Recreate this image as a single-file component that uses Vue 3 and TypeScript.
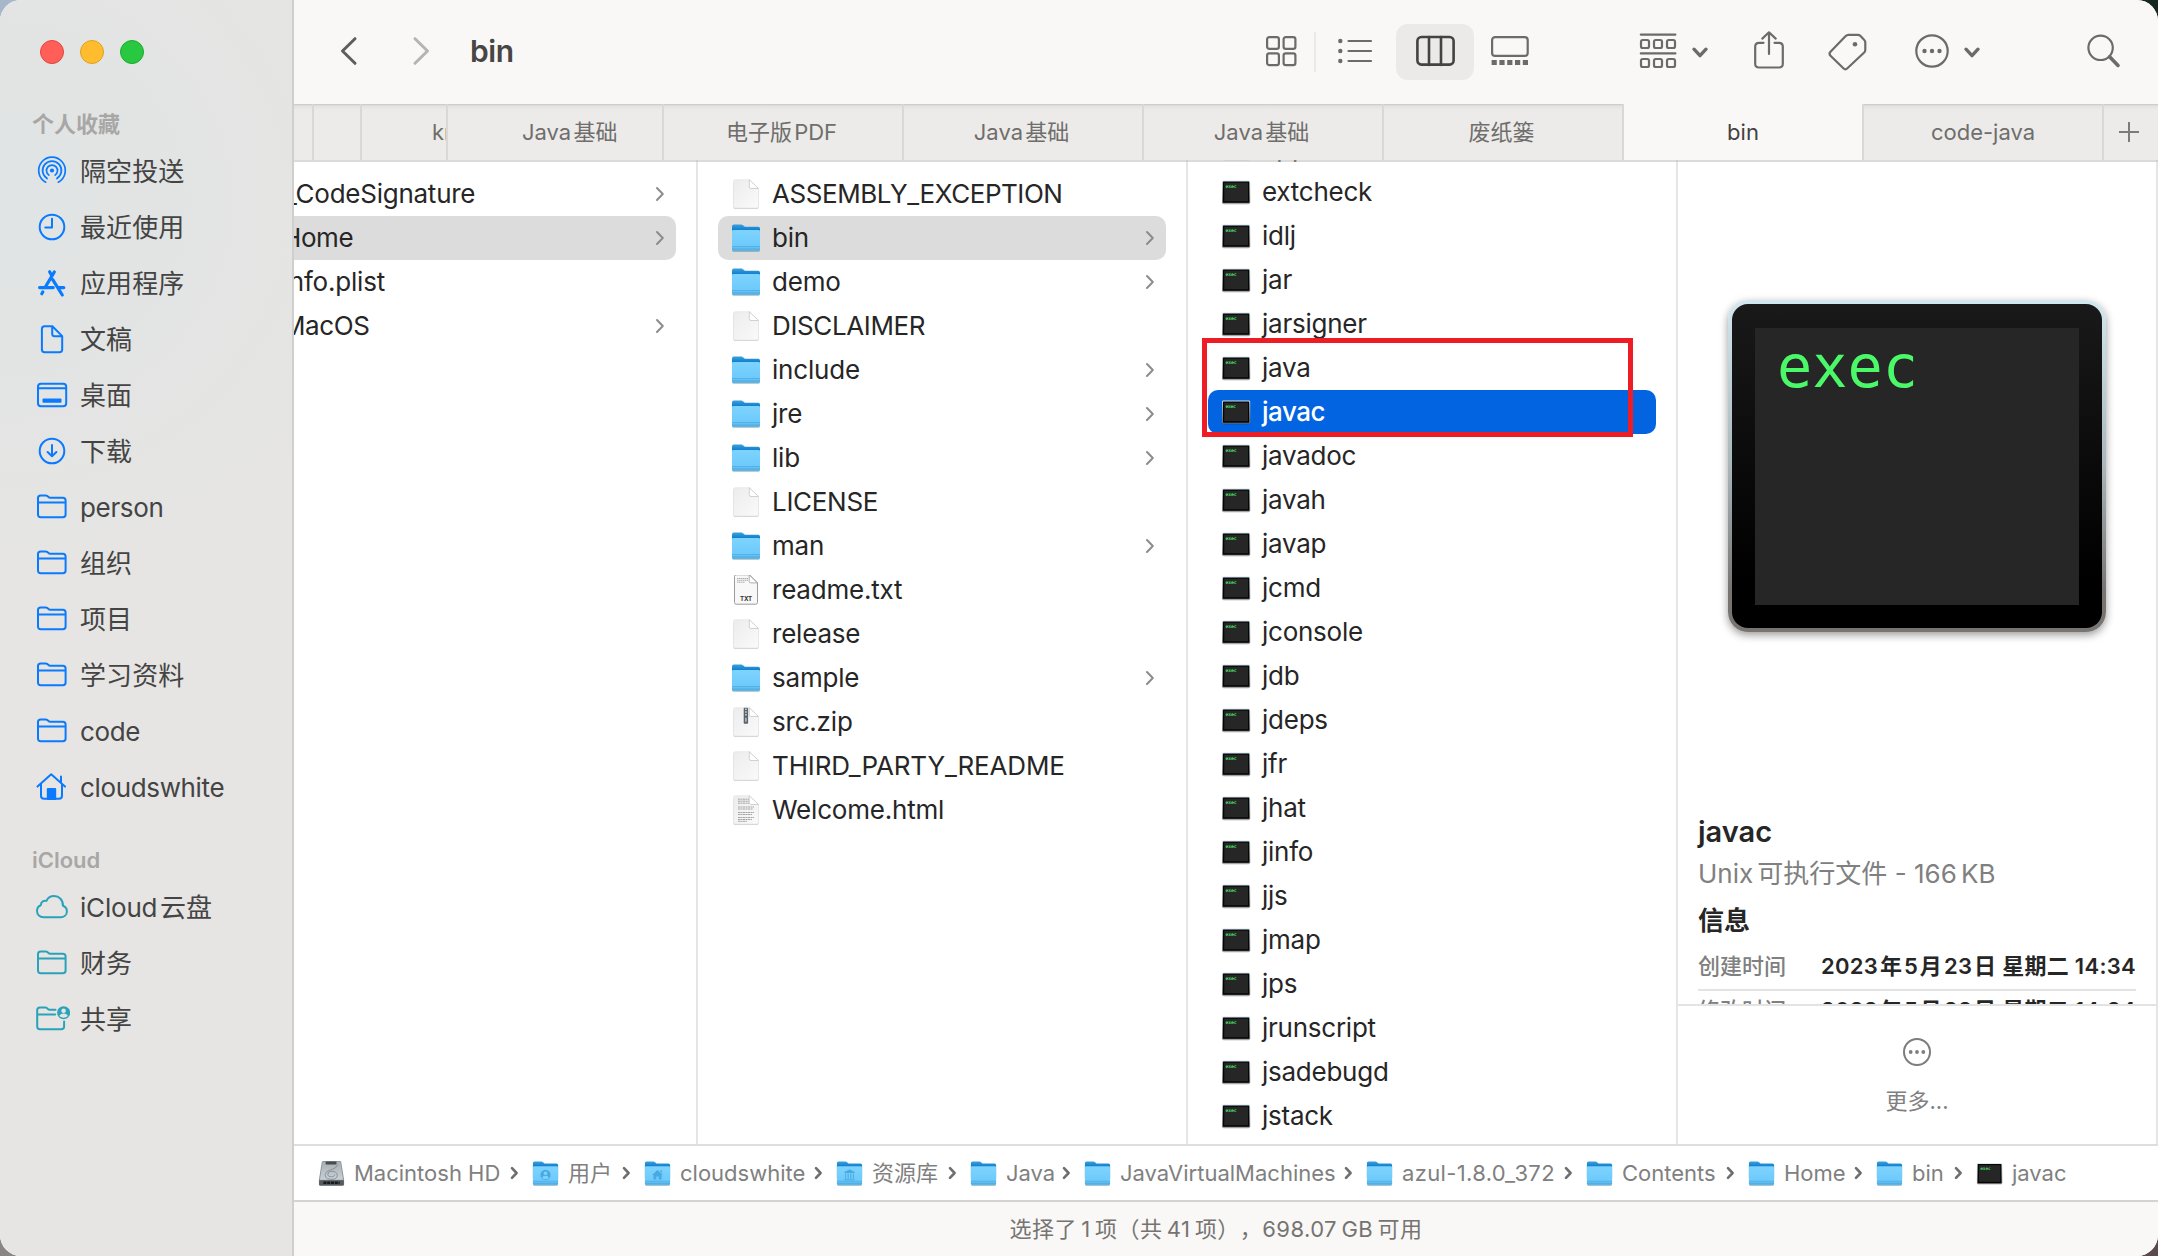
<script setup lang="ts">
interface SideItem { label: string; icon: string }
interface FileItem { name: string; icon: string; folder?: boolean; selected?: boolean; tracking?: number; indent?: number }
interface Crumb { label: string; icon: string; width: number; tracking?: number }
interface Tab { label: string; width: number; active?: boolean; pad?: number }

const favorites: SideItem[] = [
  { label: '隔空投送', icon: 'airdrop' },
  { label: '最近使用', icon: 'clock' },
  { label: '应用程序', icon: 'apps' },
  { label: '文稿', icon: 'doc' },
  { label: '桌面', icon: 'desktop' },
  { label: '下载', icon: 'download' },
  { label: 'person', icon: 'folder' },
  { label: '组织', icon: 'folder' },
  { label: '项目', icon: 'folder' },
  { label: '学习资料', icon: 'folder' },
  { label: 'code', icon: 'folder' },
  { label: 'cloudswhite', icon: 'home' },
]
const cloud: SideItem[] = [
  { label: 'iCloud云盘', icon: 'cloud' },
  { label: '财务', icon: 'folder' },
  { label: '共享', icon: 'shared' },
]
const tabs: Tab[] = [
  { label: '', width: 20 },
  { label: '', width: 48 },
  { label: 'kn', width: 86, pad: 70 },
  { label: 'Java基础', width: 216, pad: 74 },
  { label: '电子版PDF', width: 240 },
  { label: 'Java基础', width: 240 },
  { label: 'Java基础', width: 240 },
  { label: '废纸篓', width: 240 },
  { label: 'bin', width: 240, active: true },
  { label: 'code-java', width: 240 },
]
const colOne: FileItem[] = [
  { name: '_CodeSignature', icon: 'folder', folder: true, tracking: -0.25, indent: 3 },
  { name: 'Home', icon: 'folder', folder: true, selected: true, tracking: -0.4 },
  { name: 'Info.plist', icon: 'file' },
  { name: 'MacOS', icon: 'folder', folder: true, tracking: -0.4 },
]
const colTwo: FileItem[] = [
  { name: 'ASSEMBLY_EXCEPTION', icon: 'file', tracking: -0.45 },
  { name: 'bin', icon: 'folder', folder: true, selected: true },
  { name: 'demo', icon: 'folder', folder: true },
  { name: 'DISCLAIMER', icon: 'file', tracking: -0.38 },
  { name: 'include', icon: 'folder', folder: true },
  { name: 'jre', icon: 'folder', folder: true },
  { name: 'lib', icon: 'folder', folder: true },
  { name: 'LICENSE', icon: 'file', tracking: -0.3 },
  { name: 'man', icon: 'folder', folder: true },
  { name: 'readme.txt', icon: 'txt' },
  { name: 'release', icon: 'file' },
  { name: 'sample', icon: 'folder', folder: true },
  { name: 'src.zip', icon: 'zip' },
  { name: 'THIRD_PARTY_README', icon: 'file', tracking: -0.15 },
  { name: 'Welcome.html', icon: 'html' },
]
const binaries: string[] = [
  'appletviewer', 'extcheck', 'idlj', 'jar', 'jarsigner', 'java', 'javac', 'javadoc', 'javah', 'javap', 'jcmd',
  'jconsole', 'jdb', 'jdeps', 'jfr', 'jhat', 'jinfo', 'jjs', 'jmap', 'jps', 'jrunscript', 'jsadebugd', 'jstack',
]
const crumbs: Crumb[] = [
  { label: 'Macintosh HD', icon: 'disk', width: 214 },
  { label: '用户', icon: 'users', width: 112 },
  { label: 'cloudswhite', icon: 'homefolder', width: 192 },
  { label: '资源库', icon: 'library', width: 134 },
  { label: 'Java', icon: 'folder', width: 114 },
  { label: 'JavaVirtualMachines', icon: 'folder', width: 282 },
  { label: 'azul-1.8.0_372', icon: 'folder', width: 220, tracking: 0.35 },
  { label: 'Contents', icon: 'folder', width: 162 },
  { label: 'Home', icon: 'folder', width: 128 },
  { label: 'bin', icon: 'folder', width: 100 },
  { label: 'javac', icon: 'exec', width: 110 },
]

// Splits a label wherever Han characters touch Latin ones, so a thin gap can be set between them.
function runs(text: string): string[] {
  return text.split(/(?<=[\u4e00-\u9fff])(?=[A-Za-z0-9])|(?<=[A-Za-z0-9])(?=[\u4e00-\u9fff])/)
}
</script>

<template>
  <div class="desktop">
    <svg class="sprite" width="0" height="0" aria-hidden="true">
      <defs>
        <linearGradient id="gFolder" x1="0" y1="0" x2="0" y2="1">
          <stop offset="0" stop-color="#7dd3fd" /><stop offset=".75" stop-color="#6ecafb" /><stop offset="1" stop-color="#55b5ea" />
        </linearGradient>
        <linearGradient id="gBack" x1="0" y1="0" x2="0" y2="1">
          <stop offset="0" stop-color="#3c9fdc" /><stop offset=".3" stop-color="#0e7fcd" /><stop offset="1" stop-color="#0e7fcd" />
        </linearGradient>
        <linearGradient id="gPaper" x1="0" y1="0" x2="1" y2="1">
          <stop offset="0" stop-color="#ececec" /><stop offset="1" stop-color="#fafafa" />
        </linearGradient>
        <linearGradient id="gFrame" x1="0" y1="0" x2="0" y2="1">
          <stop offset="0" stop-color="#d3e6ec" /><stop offset="1" stop-color="#777574" />
        </linearGradient>
        <linearGradient id="gDisk" x1="0" y1="0" x2="0" y2="1">
          <stop offset="0" stop-color="#a9b0b4" /><stop offset="1" stop-color="#c9d1d6" />
        </linearGradient>
      </defs>
      <symbol id="f-folder" viewBox="0 0 30 30">
        <rect x="1.2" y="6" width="27.6" height="23" rx="1.6" fill="#000" opacity=".22" />
        <path d="M1 3.4Q1 1.6 2.8 1.6h7.4q1 0 1.8.7l1.2.9q.7.6 1.6.6h12.4q1.8 0 1.8 1.8V20H1z" fill="url(#gBack)" />
        <path d="M1 8.2Q1 6.9 2.3 6.9h25.4q1.3 0 1.3 1.3v18.2q0 1.6-1.6 1.6H2.6Q1 28 1 26.400z" fill="url(#gFolder)" />
        <path d="M1 23.600h28M1 26h28" stroke="#45a3dc" stroke-width=".8" opacity=".8" />
      </symbol>
      <symbol id="f-file" viewBox="0 0 30 30">
        <path d="M2.500 2.800q0-1.800 1.800-1.800h14l9.200 8.800v18q0 1.800-1.800 1.800H4.300q-1.800 0-1.800-1.800z" fill="#000" opacity=".16" transform="translate(0 .7)" />
        <path d="M2.500 2.500Q2.500.7 4.300.7h14l9.200 8.800v17.700q0 1.800-1.800 1.800H4.300q-1.800 0-1.800-1.800z" fill="url(#gPaper)" stroke="#dcdcdc" stroke-width=".5" />
        <path d="M18.300.700v7.200q0 1.600 1.600 1.600h7.600z" fill="#fff" stroke="#c6c6c6" stroke-width=".8" />
      </symbol>
      <symbol id="f-txt" viewBox="0 0 30 30">
        <path d="M3.500 1.500q0-1.700 1.700-1.700h13.300l8 8v19.700q0 1.700-1.700 1.700H5.200q-1.700 0-1.700-1.700z" fill="#f8f8f8" stroke="#9c9c9c" stroke-width="1" />
        <path d="M18.200-.1v6.500q0 1.500 1.500 1.500h6.600z" fill="#fff" stroke="#9b9b9b" stroke-width=".8" />
        <path d="M6 3.500h11M6 5.300h11M6 7.200h8" stroke="#9a9a9a" stroke-width=".8" stroke-dasharray="1.600 .4" />
        <text x="15" y="25.500" text-anchor="middle" font-family="Inter, sans-serif" font-weight="700" font-size="6.200" fill="#333">TXT</text>
      </symbol>
      <symbol id="f-zip" viewBox="0 0 30 30">
        <use href="#f-file" width="30" height="30" />
        <rect x="12.700" y=".7" width="4.400" height="16" rx="1" fill="#59636c" />
        <path d="M14.900 1.500v8" stroke="#c3cbd0" stroke-width="1.800" stroke-dasharray="1.500 1.300" />
        <rect x="14" y="10.500" width="1.800" height="4.500" rx=".9" fill="#aab3b9" />
      </symbol>
      <symbol id="f-html" viewBox="0 0 30 30">
        <use href="#f-file" width="30" height="30" />
        <path d="M7 4.200h11M7 6.200h11M7 8.200h11M7 12h16M7 14h15M7 17.500h16M7 19.500h14M7 22.500h16M7 24.500h14M7 26.300h9" stroke="#a5a5a5" stroke-width="1" stroke-dasharray="2.600 .5 1.400 .4" />
      </symbol>
      <symbol id="f-exec" viewBox="0 0 30 30">
        <rect x="1.300" y="5" width="27.600" height="22.400" rx="1.400" fill="#000" opacity=".18" />
        <rect x="1" y="3.500" width="28.200" height="23" rx="1.300" fill="url(#gFrame)" />
        <rect x="1.900" y="4.500" width="26.400" height="21.200" rx=".6" fill="#050505" />
        <rect x="3.200" y="5.700" width="23.800" height="18.500" fill="#262626" />
        <text x="4.600" y="10.600" font-family="'DejaVu Sans Mono', monospace" font-weight="700" font-size="4.900" fill="#46d35f">exec</text>
      </symbol>
      <symbol id="f-users" viewBox="0 0 30 30">
        <use href="#f-folder" width="30" height="30" />
        <circle cx="15" cy="16.500" r="5.700" fill="#48a9e3" /><circle cx="15" cy="14.800" r="2" fill="#7dd3fd" />
        <path d="M11.200 20q.8-2.600 3.800-2.600t3.800 2.600q-3.800 3-7.600 0z" fill="#7dd3fd" />
      </symbol>
      <symbol id="f-homefolder" viewBox="0 0 30 30">
        <use href="#f-folder" width="30" height="30" />
        <path d="M15 11l6 5.600h-1.500v5.100h-3.200v-3.500h-2.600v3.500h-3.200v-5.100H9zM18.300 11.500h1.600v3l-1.600-1.500z" fill="#48a9e3" />
      </symbol>
      <symbol id="f-library" viewBox="0 0 30 30">
        <use href="#f-folder" width="30" height="30" />
        <path d="M15 11l5.500 2.800h-11zM10.700 15v6M13.500 15v6M16.500 15v6M19.300 15v6M9.200 22h11.600" fill="#48a9e3" stroke="#48a9e3" stroke-width="1.100" />
      </symbol>
      <symbol id="f-disk" viewBox="0 0 30 30">
        <path d="M4.200 2.200Q4.400 1 5.800 1h18.400q1.400 0 1.600 1.200L29 22v5q0 1.500-1.500 1.500h-25Q1 28.500 1 27v-5z" fill="#8f979c" />
        <path d="M5.200 2.200h19.600L27.800 22H2.200z" fill="url(#gDisk)" />
        <rect x="8.500" y="1.800" width="12" height="3.200" rx=".6" fill="#474c50" />
        <path d="M22 5q-1.500 4-6.500 5.500c-4 1.300-8 3-7.500 7 .5 3 4 4 7 4s6.500-1 6.500-4.500c0-3-3.500-4.500-6-4.500s-4.500 1-4.500 3.500 2 2.600 4 2.600 3.500-.8 3.500-2.400" fill="none" stroke="#7c868c" stroke-width=".9" />
        <path d="M1.300 22.500h27.400v4.700q0 1-1 1H2.300q-1 0-1-1z" fill="#555b5f" />
        <path d="M6 25.300h18" stroke="#17191a" stroke-width="3" stroke-dasharray="3.400 .8" />
      </symbol>

      <symbol id="s-folder" viewBox="0 0 36 36">
        <path d="M4 9q0-2.600 2.600-2.600h5q1 0 1.800.7l1 .9q.8.700 1.800.7h12.600q2.800 0 2.800 2.800v13.900q0 2.800-2.800 2.800H6.800Q4 28.200 4 25.400zM4 13.600h27.600" />
      </symbol>
      <symbol id="s-airdrop" viewBox="0 0 36 36">
        <circle cx="18" cy="17.500" r="2.100" fill="currentColor" stroke="none" />
        <path d="M14.900 22.100a5.500 5.500 0 1 1 6.200 0M13.100 25.500a9.400 9.400 0 1 1 9.800 0M11.700 29.200a13.300 13.300 0 1 1 12.600 0" stroke-width="1.700" />
      </symbol>
      <symbol id="s-clock" viewBox="0 0 36 36">
        <circle cx="18" cy="18" r="12.300" /><path d="M18 9.700v8.700h-6.700" />
      </symbol>
      <symbol id="s-apps" viewBox="0 0 36 36">
        <path d="M20.300 7l-8.800 14.800M15.600 6.800l2.400 4.200M18.700 14.700l9.600 15.300M5.600 22.600h13.600M24.800 22.600h5M8.800 27l-1 1.700" stroke-width="3.200" />
      </symbol>
      <symbol id="s-doc" viewBox="0 0 36 36">
        <path d="M7.900 8q0-2.700 2.700-2.700h7.800l9.800 9.800v13.400q0 2.700-2.700 2.700H10.600q-2.700 0-2.700-2.700zM18.200 5.500v7.300q0 2.500 2.500 2.500h7.400" />
      </symbol>
      <symbol id="s-desktop" viewBox="0 0 36 36">
        <rect x="4" y="6.800" width="28.200" height="22.400" rx="3" /><path d="M4 11.300h28" />
        <rect x="8.500" y="21.600" width="19" height="4.200" rx="1" fill="currentColor" stroke="none" />
      </symbol>
      <symbol id="s-download" viewBox="0 0 36 36">
        <circle cx="18" cy="18" r="12.300" /><path d="M18 12v11M13.600 19l4.400 4.300 4.400-4.300" />
      </symbol>
      <symbol id="s-home" viewBox="0 0 36 36">
        <path d="M3.500 17.600L17.200 5.200 31 17.600M7 15.500v11.300q0 3 3 3h15q3 0 3-3V15.500M27 13V7.500" />
        <path d="M13.800 30v-10h7.400v10z" fill="currentColor" />
      </symbol>
      <symbol id="s-cloud" viewBox="0 0 36 36">
        <path d="M9.600 28.200h16.900c3.700 0 6.400-2.500 6.400-5.800 0-2.700-1.700-4.800-4-5.600.3-5.900-3.800-9.700-8.800-9.700-3.600 0-6.300 1.900-7.600 4.700-3-.7-5.500 1.200-5.700 4.400C4.600 17 3 19.400 3 22.100c0 3.500 2.800 6.100 6.600 6.100z" />
      </symbol>
      <symbol id="s-shared" viewBox="0 0 36 36">
        <path d="M21.500 8.700h-5.800q-1 0-1.800-.7l-.9-.9q-.7-.7-1.700-.7H6Q3.200 6.400 3.200 9v16.400q0 2.800 2.800 2.800h21.200q2.900 0 2.900-2.800v-4.800M3.200 13.600h18" />
        <circle cx="29.600" cy="11.700" r="6.500" fill="currentColor" stroke="none" />
        <circle cx="29.600" cy="9.700" r="2.300" fill="#e6e5e3" stroke="none" /><path d="M25.400 15q.8-2.600 4.200-2.600t4.200 2.600q-1.800 1.700-4.200 1.700T25.400 15z" fill="#e6e5e3" stroke="none" />
      </symbol>
    </svg>

    <div class="window">
      <aside class="sidebar">
        <div class="lights"><i class="red" /><i class="amber" /><i class="green" /></div>
        <h2 class="group">个人收藏</h2>
        <ul class="side-list">
          <li v-for="f in favorites" :key="f.label" :class="{ latin: /^\w+$/.test(f.label) }">
            <svg class="side-icon" width="36" height="36"><use :href="'#s-' + f.icon" /></svg><span>{{ f.label }}</span>
          </li>
        </ul>
        <h2 class="group second">iCloud</h2>
        <ul class="side-list teal">
          <li v-for="f in cloud" :key="f.label">
            <svg class="side-icon" width="36" height="36"><use :href="'#s-' + f.icon" /></svg>
            <span><span v-for="(r, i) in runs(f.label)" :key="i" class="run">{{ r }}</span></span>
          </li>
        </ul>
      </aside>

      <main class="main">
        <header class="toolbar">
          <svg class="back" width="20" height="40" viewBox="0 0 20 40"><path d="M16 6.700L3.500 19 16 31.300" /></svg>
          <svg class="fwd" width="20" height="40" viewBox="0 0 20 40"><path d="M4 6.700L16.500 19 4 31.300" /></svg>
          <h1>bin</h1>
          <svg class="grid" width="30" height="40" viewBox="0 0 30 40">
            <rect x="1.100" y="5.100" width="11.800" height="11.800" rx="2.200" /><rect x="17.600" y="5.100" width="11.800" height="11.800" rx="2.200" />
            <rect x="1.100" y="21.300" width="11.800" height="11.800" rx="2.200" /><rect x="17.600" y="21.300" width="11.800" height="11.800" rx="2.200" />
          </svg>
          <i class="rule" />
          <svg class="list" width="36" height="40" viewBox="0 0 36 40">
            <path d="M10.500 9H33M10.500 19H33M10.500 29H33" />
            <g fill="#6c6b69" stroke="none"><circle cx="2.300" cy="9" r="2.200" /><circle cx="2.300" cy="19" r="2.200" /><circle cx="2.300" cy="29" r="2.200" /></g>
          </svg>
          <span class="view-on">
            <svg width="40" height="40" viewBox="0 0 40 40"><rect x="2.400" y="5" width="36.200" height="27.600" rx="4" /><path d="M14 5v28M26 5v28" /></svg>
          </span>
          <svg class="gallery" width="38" height="40" viewBox="0 0 38 40">
            <rect x="1.100" y="5.100" width="35.600" height="18.800" rx="3" /><path class="sq" d="M.6 30.500h36.600" />
          </svg>
          <svg class="group-by" width="36" height="40" viewBox="0 0 36 40">
            <path d="M.8 2.600h34.600M.8 21.400h34.600" />
            <g><rect x="1" y="8" width="8" height="8" rx="1.800" /><rect x="14" y="8" width="8" height="8" rx="1.800" /><rect x="27" y="8" width="8" height="8" rx="1.800" />
              <rect x="1" y="27" width="8" height="8" rx="1.800" /><rect x="14" y="27" width="8" height="8" rx="1.800" /><rect x="27" y="27" width="8" height="8" rx="1.800" /></g>
          </svg>
          <svg class="caret c1" width="16" height="40" viewBox="0 0 16 40"><path d="M2 17.200l6 6.400 6-6.400" /></svg>
          <svg class="share" width="30" height="40" viewBox="0 0 30 40">
            <path d="M9.500 10.800H5Q1.200 10.800 1.200 14.500v17.300q0 3.700 3.800 3.700h20q3.800 0 3.800-3.700V14.500q0-3.700-3.800-3.700h-4.500M15 22V1M8.300 6.600L15 0.300l6.700 6.300" />
          </svg>
          <svg class="tag" width="40" height="40" viewBox="0 0 40 40">
            <path d="M20.500 2.800h9.300q1.500 0 2.500 1l3.800 4q1.200 1.200 1.200 2.800v7.200q0 1.600-1.100 2.700L19.400 36.300q-2 2-4 0L2.500 23.800q-2-2 0-4L17.700 4.100q1.200-1.300 2.800-1.300z" /><circle cx="27" cy="12.300" r="2.300" fill="#6c6b69" stroke="none" />
          </svg>
          <svg class="more" width="34" height="40" viewBox="0 0 34 40">
            <circle cx="17" cy="19" r="15.700" /><g fill="#6c6b69" stroke="none"><circle cx="9.500" cy="19" r="2.200" /><circle cx="17" cy="19" r="2.200" /><circle cx="24.500" cy="19" r="2.200" /></g>
          </svg>
          <svg class="caret c2" width="16" height="40" viewBox="0 0 16 40"><path d="M2 17.200l6 6.400 6-6.400" /></svg>
          <svg class="search" width="34" height="40" viewBox="0 0 34 40"><circle cx="13.600" cy="15.800" r="12.200" /><path d="M22.600 24.800l8.400 8.600" stroke-width="3.600" /></svg>
        </header>

        <nav class="tabs">
          <div v-for="(t, i) in tabs" :key="i" class="tab" :class="{ active: t.active, left: t.pad }" :style="{ width: t.width + 'px', paddingLeft: (t.pad ?? 0) + 'px' }">
            <span v-for="(r, j) in runs(t.label)" :key="j" class="run">{{ r }}</span>
          </div>
          <div class="plus"><svg width="20" height="20" viewBox="0 0 20 20"><path d="M10 0v20M0 10h20" /></svg></div>
        </nav>

        <section class="columns">
          <ul class="col first">
            <li v-for="f in colOne" :key="f.name" :class="{ selected: f.selected }">
              <svg width="30" height="30"><use :href="'#f-' + f.icon" /></svg><span :style="{ letterSpacing: (f.tracking ?? -0.2) + 'px', paddingLeft: (f.indent ?? 0) + 'px' }">{{ f.name }}</span>
              <svg v-if="f.folder" class="chev" width="8" height="14" viewBox="0 0 8 14"><path d="M1 1l5.800 6L1 13" /></svg>
            </li>
          </ul>
          <ul class="col">
            <li v-for="f in colTwo" :key="f.name" :class="{ selected: f.selected }">
              <svg width="30" height="30"><use :href="'#f-' + f.icon" /></svg><span :style="{ letterSpacing: (f.tracking ?? -0.2) + 'px' }">{{ f.name }}</span>
              <svg v-if="f.folder" class="chev" width="8" height="14" viewBox="0 0 8 14"><path d="M1 1l5.800 6L1 13" /></svg>
            </li>
          </ul>
          <ul class="col third">
            <li v-for="b in binaries" :key="b" :class="{ chosen: b === 'javac' }">
              <svg width="30" height="30"><use href="#f-exec" /></svg><span>{{ b }}</span>
            </li>
            <i class="marker" />
          </ul>
          <article class="preview">
            <div class="stage"><div class="frame"><div class="bezel"><div class="screen">exec</div></div></div></div>
            <div class="info">
              <h3>javac</h3>
              <p class="kind"><span v-for="(r, i) in runs('Unix可执行文件 - 166')" :key="i" class="run">{{ r }}</span><span class="run unit">KB</span></p>
              <h4>信息</h4>
              <dl>
                <div v-for="label in ['创建时间', '修改时间']" :key="label" class="pair">
                  <dt>{{ label }}</dt>
                  <dd><span v-for="(r, i) in runs('2023年5月23日 星期二 14:34')" :key="i" class="run">{{ r }}</span></dd>
                </div>
              </dl>
            </div>
            <footer class="actions">
              <svg width="30" height="30" viewBox="0 0 30 30"><circle cx="15" cy="15" r="13" /><g fill="#7d7d7d" stroke="none"><circle cx="8.700" cy="15" r="1.900" /><circle cx="15" cy="15" r="1.900" /><circle cx="21.300" cy="15" r="1.900" /></g></svg>
              <span>更多...</span>
            </footer>
          </article>
        </section>

        <div class="path">
          <div v-for="(c, i) in crumbs" :key="i" class="crumb" :style="{ width: c.width + 'px' }">
            <svg width="27" height="27"><use :href="'#f-' + c.icon" /></svg><span :style="{ letterSpacing: (c.tracking ?? 0) + 'px' }">{{ c.label }}</span>
            <svg v-if="i < crumbs.length - 1" class="sep" width="9" height="14" viewBox="0 0 9 14"><path d="M2 2.200L6.600 7 2 11.800" /></svg>
          </div>
        </div>
        <div class="status"><p><span v-for="(r, i) in runs('选择了1项（共41项），698.07')" :key="i" class="run">{{ r }}</span><span class="run">GB</span><span class="run">可用</span></p></div>
      </main>
    </div>
  </div>
</template>

<style>
body { margin: 0; overflow: hidden; }
</style>

<style scoped>
.desktop {
  width: 2158px; height: 1256px;
  background:
    linear-gradient(#a7b7ca, #a7b7ca) 0 0 / 50% 50% no-repeat,
    linear-gradient(#17281f, #17281f) 100% 0 / 50% 50% no-repeat,
    linear-gradient(#8b8484, #8b8484) 0 100% / 50% 50% no-repeat,
    #5b4a4b;
  font-family: Inter, "Noto Sans CJK SC", sans-serif;
  font-size: 26px;
  color: #262626;
}
.sprite { position: absolute; }
h1, h2, h3, h4, p, ul, dl, dd { margin: 0; padding: 0; list-style: none; }
svg { flex: none; display: block; overflow: visible; }
.run + .run { margin-left: 0.1em; }

.window { width: 2158px; height: 1256px; display: flex; border-radius: 21px; overflow: hidden; background: #fff; }

.sidebar {
  box-sizing: border-box; width: 294px; flex: none;
  border-right: 2px solid #d0cfce;
  background: radial-gradient(420px 400px at 0 200px, #e0e4e4, rgba(224, 228, 228, 0)), #e6e5e3;
}
.lights { display: flex; gap: 16px; padding: 40px 0 0 40px; height: 24px; }
.lights i { width: 24px; height: 24px; border-radius: 50%; box-sizing: border-box; }
.red { background: #ff5f57; border: 1px solid #e0443e; }
.amber { background: #febc2e; border: 1px solid #dea123; }
.green { background: #28c840; border: 1px solid #1aab29; }
.group { margin: 44px 0 0 32px; height: 32px; line-height: 32px; font-size: 22px; font-weight: 600; color: #a8a7a6; }
.group.second { margin-top: 29px; }
.side-list { margin-top: 3px; color: #444; }
.side-list li { height: 56px; display: flex; align-items: center; padding-left: 34px; line-height: 57px; letter-spacing: 0.1px; }
.side-list li.latin { letter-spacing: -0.35px; }
.side-list.teal .run:first-child:not(:last-child) { letter-spacing: -0.2px; }
.side-list li > span { margin-left: 10px; }
.side-icon { color: #0a7aff; fill: none; stroke: currentColor; stroke-width: 2; stroke-linecap: round; stroke-linejoin: round; }
.teal .side-icon { color: #29a3b9; }

.main { flex: 1; min-width: 0; display: flex; flex-direction: column; }
.toolbar { height: 104px; flex: none; display: flex; align-items: center; background: #f9f8f6; }
.toolbar svg { fill: none; stroke: #6c6b69; stroke-width: 2.200; stroke-linecap: round; stroke-linejoin: round; }
.toolbar .back { margin-left: 45px; stroke-width: 3; stroke: #5f5e5d; }
.toolbar .fwd { margin-left: 52px; stroke-width: 3; stroke: #b5b4b3; }
h1 { margin: 0 0 2px 39px; width: 796px; font-size: 30px; line-height: 40px; font-weight: 600; color: #474645; letter-spacing: -0.4px; }
.rule { margin-left: 18px; width: 2px; height: 40px; background: #ebeae8; }
.list { margin-left: 22px; }
.view-on { margin-left: 22px; width: 78px; height: 56px; border-radius: 12px; background: #ebeae8; display: flex; align-items: center; justify-content: center; }
.toolbar .view-on svg { stroke: #444341; stroke-width: 2.600; }
.gallery { margin-left: 17px; }
.gallery .sq { stroke-width: 5; stroke-dasharray: 5.200 2.600; stroke-linecap: butt; }
.group-by { margin-left: 111px; }
.toolbar .caret { stroke-width: 3.400; }
.c1 { margin-left: 16px; }
.share { margin-left: 46px; }
.tag { margin-left: 44px; }
.more { margin-left: 47px; }
.c2 { margin-left: 15px; }
.search { margin-left: 107px; }

.tabs { height: 56px; flex: none; display: flex; background: #f9f8f6; }
.tab {
  box-sizing: border-box; flex: none; display: flex; align-items: center; justify-content: center; overflow: hidden; white-space: nowrap;
  padding-right: 3px;
  border-right: 2px solid #d9d8d6; background: linear-gradient(#c8c7c5, #e3e2e0 2px, #ecebe9 6px);
  font-size: 22px; line-height: 56px; color: #6f6e6c;
}
.tab.left { justify-content: flex-start; padding-right: 0; }
.tab.active, .tab.active + .tab { padding-right: 0; }
.tab.active { background: #f9f8f6; color: #434241; }
.plus { flex: 1; display: flex; align-items: center; justify-content: center; background: linear-gradient(#c8c7c5, #e3e2e0 2px, #ecebe9 6px); }
.plus svg { stroke: #7c7b7a; stroke-width: 2; position: relative; left: -2px; }

.columns { position: relative; height: 984px; flex: none; display: flex; overflow: hidden; }
.columns::before { content: ''; position: absolute; z-index: 3; left: 0; right: 0; top: 0; height: 2px; background: rgba(190, 190, 188, 0.55); }
.col { box-sizing: border-box; width: 490px; flex: none; border-right: 2px solid #e5e5e5; padding: 12px 20px 0; }
.col.first { width: 404px; padding-left: 0; overflow: hidden; }
.col.first li { margin-left: -66px; }
.col.third { position: relative; padding-top: 0; margin-top: -34px; height: 1018px; }
.col li { height: 44px; border-radius: 10px; display: flex; align-items: center; padding-left: 13px; line-height: 44px; white-space: nowrap; letter-spacing: -0.25px; }
.col li > span { margin-left: 11px; }
.col li.selected { background: #dcdcdc; }
.col li.chosen { background: #0264e1; color: #fff; font-weight: 500; letter-spacing: -0.5px; }
.chev { margin-left: auto; margin-right: 12px; fill: none; stroke: #8c8c8c; stroke-width: 2; stroke-linecap: round; stroke-linejoin: round; }
.marker { position: absolute; left: 14px; top: 212px; width: 421px; height: 89px; border: 5px solid #ee1c25; }

.preview { box-sizing: border-box; flex: 1; display: flex; flex-direction: column; border-right: 2px solid #e5e5e5; }
.stage { height: 640px; flex: none; display: flex; justify-content: center; }
.frame { margin-top: 140px; width: 370px; height: 324px; padding: 4px; border-radius: 20px; background: linear-gradient(#d3e7ee, #a9b6ba 50%, #777472 88%); box-shadow: 0 3px 8px rgba(0, 0, 0, 0.4); }
.bezel { box-sizing: border-box; height: 324px; padding: 24px 23px; border-radius: 16px; background: linear-gradient(#191919, #000 85%); }
.screen { box-sizing: border-box; height: 277px; padding: 6px 0 0 22px; background: #262626; color: #4bf968; font-family: "DejaVu Sans Mono", monospace; font-size: 58.500px; line-height: 66px; }
.info { box-sizing: border-box; height: 204px; flex: none; overflow: hidden; padding: 11px 20px 0; }
h3 { font-size: 29px; line-height: 41px; font-weight: 600; }
.kind { line-height: 43px; color: #808080; white-space: pre; }
.kind .run + .run { margin-left: 0.16em; }
h4 { line-height: 51px; height: 50px; font-weight: 600; font-size: 26px; }
.pair { box-sizing: border-box; height: 46px; display: flex; justify-content: space-between; line-height: 42px; border-bottom: 2px solid #e3e3e3; font-size: 22px; }
.pair + .pair { border-bottom: 0; line-height: 39px; }
dt { color: #808080; font-weight: 500; }
dd { font-weight: 600; letter-spacing: 0.3px; white-space: pre; }
dd .run + .run { margin-left: 0.08em; }
.actions { flex: 1; border-top: 2px solid #e3e3e3; display: flex; flex-direction: column; align-items: center; padding-top: 31px; font-size: 22px; line-height: 32px; color: #808080; }
.actions svg { fill: none; stroke: #7d7d7d; stroke-width: 2; }
.actions span { margin-top: 18px; }

.path { box-sizing: border-box; height: 58px; flex: none; display: flex; align-items: center; padding-left: 24px; border-top: 2px solid #dedede; border-bottom: 2px solid #d4d3d2; font-size: 22px; color: #808080; background: #fff; }
.crumb { flex: none; display: flex; align-items: center; white-space: nowrap; line-height: 40px; }
.crumb span { margin-left: 9px; }
.sep { margin-left: auto; margin-right: 13px; fill: none; stroke: #6f6f6f; stroke-width: 2.600; stroke-linecap: round; stroke-linejoin: round; }
.status { flex: 1; display: flex; justify-content: center; background: #f9f8f6; font-size: 22px; line-height: 54px; color: #757472; }
.status p { position: relative; left: -10px; text-spacing-trim: space-all; white-space: nowrap; letter-spacing: 0.45px; }
.status .run + .run { margin-left: 0.2em; }
</style>
